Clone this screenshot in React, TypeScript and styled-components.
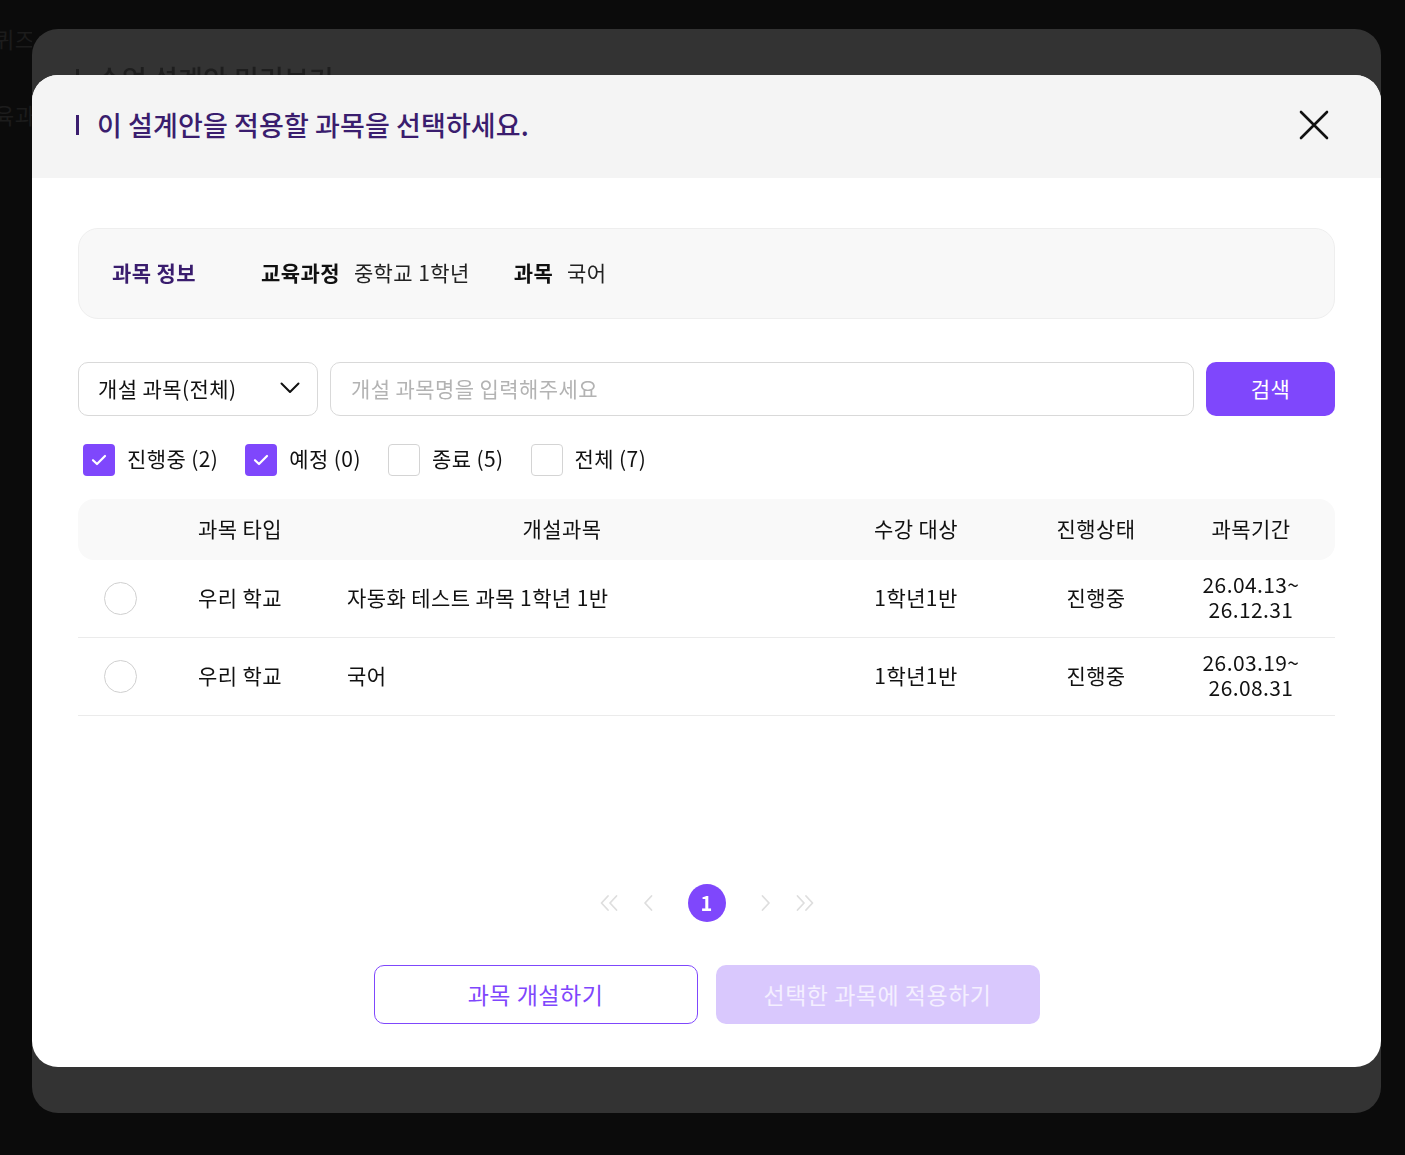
import styled, { createGlobalStyle } from 'styled-components';

const PURPLE = '#7f47fc';

const GlobalStyle = createGlobalStyle`
  * { box-sizing: border-box; }
  html, body { margin: 0; padding: 0; }
  body {
    font-family: 'Noto Sans CJK KR', 'Noto Sans', sans-serif;
    background: #0b0b0b;
    color: #111;
    letter-spacing: 0.4px;
  }
`;

type Row = {
  id: number;
  type: string;
  name: string;
  target: string;
  status: string;
  start: string;
  end: string;
};

const rows: Row[] = [
  { id: 1, type: '우리 학교', name: '자동화 테스트 과목 1학년 1반', target: '1학년1반', status: '진행중', start: '26.04.13~', end: '26.12.31' },
  { id: 2, type: '우리 학교', name: '국어', target: '1학년1반', status: '진행중', start: '26.03.19~', end: '26.08.31' },
];

const filters = [
  { label: '진행중 (2)', checked: true },
  { label: '예정 (0)', checked: true },
  { label: '종료 (5)', checked: false },
  { label: '전체 (7)', checked: false },
];

const CheckIcon = () => (
  <svg width='20' height='20' viewBox='0 0 20 20' fill='none'>
    <path d='M4 10.2l4 3.8 8-8' stroke='#fff' strokeWidth='2.2' strokeLinecap='round' strokeLinejoin='round' />
  </svg>
);

const CloseIcon = () => (
  <svg width='30' height='30' viewBox='0 0 30 30' fill='none'>
    <path d='M2 2l26 26M28 2L2 28' stroke='#111' strokeWidth='2.6' strokeLinecap='round' />
  </svg>
);

const ChevronDown = () => (
  <svg width='20' height='12' viewBox='0 0 20 12' fill='none'>
    <path d='M1.5 1.5l8.5 8.5 8.5-8.5' stroke='#111' strokeWidth='2' strokeLinecap='round' strokeLinejoin='round' />
  </svg>
);

const DoubleArrow = ({ right }: { right?: boolean }) => (
  <svg width='18' height='20' viewBox='0 0 18 20' fill='none'>
    <g transform={right ? 'matrix(-1 0 0 1 18 0)' : undefined} stroke='#dedede' strokeWidth='1.8' strokeLinecap='round' strokeLinejoin='round'>
      <path d='M8 3L1.5 10 8 17' />
      <path d='M16.5 3L10 10l6.5 7' />
    </g>
  </svg>
);

const SingleArrow = ({ right }: { right?: boolean }) => (
  <svg width='10' height='20' viewBox='0 0 10 20' fill='none'>
    <g transform={right ? 'matrix(-1 0 0 1 10 0)' : undefined} stroke='#dedede' strokeWidth='1.8' strokeLinecap='round' strokeLinejoin='round'>
      <path d='M8.5 3L2 10l6.5 7' />
    </g>
  </svg>
);

const App = () => {
  return (
    <>
      <GlobalStyle />
      <Page>
        <BehindColumn>
          <DimText>퀴즈</DimText>
          <DimText>육과</DimText>
        </BehindColumn>
        <Overlay>
          <BackModal>
            <ModalHeader $dim>
              <Title $dim>
                <TitleBar $dim />
                수업 설계안 미리보기
              </Title>
            </ModalHeader>
          </BackModal>
          <Modal>
            <ModalHeader>
              <Title>
                <TitleBar />
                이 설계안을 적용할 과목을 선택하세요.
              </Title>
              <CloseButton aria-label='닫기'>
                <CloseIcon />
              </CloseButton>
            </ModalHeader>

            <ModalBody>
              <InfoBox>
                <InfoHeading>과목 정보</InfoHeading>
                <InfoItem>
                  <InfoLabel>교육과정</InfoLabel>
                  <InfoValue>중학교 1학년</InfoValue>
                </InfoItem>
                <InfoItem>
                  <InfoLabel>과목</InfoLabel>
                  <InfoValue>국어</InfoValue>
                </InfoItem>
              </InfoBox>

              <SearchRow>
                <SelectBox>
                  <span>개설 과목(전체)</span>
                  <ChevronDown />
                </SelectBox>
                <SearchInput placeholder='개설 과목명을 입력해주세요' />
                <SearchButton>검색</SearchButton>
              </SearchRow>

              <FilterRow>
                {filters.map((f) => (
                  <FilterItem key={f.label}>
                    <CheckBox $checked={f.checked}>{f.checked && <CheckIcon />}</CheckBox>
                    {f.label}
                  </FilterItem>
                ))}
              </FilterRow>

              <Table>
                <HeaderRow>
                  <Cell />
                  <Cell>과목 타입</Cell>
                  <Cell>개설과목</Cell>
                  <Cell>수강 대상</Cell>
                  <Cell>진행상태</Cell>
                  <Cell>과목기간</Cell>
                </HeaderRow>
                {rows.map((r) => (
                  <BodyRow key={r.id}>
                    <Cell>
                      <Radio />
                    </Cell>
                    <Cell>{r.type}</Cell>
                    <Cell $left>{r.name}</Cell>
                    <Cell>{r.target}</Cell>
                    <Cell>{r.status}</Cell>
                    <DateCell>
                      <span>{r.start}</span>
                      <span>{r.end}</span>
                    </DateCell>
                  </BodyRow>
                ))}
              </Table>

              <Pagination>
                <DoubleArrow />
                <SingleArrow />
                <PageNumber>1</PageNumber>
                <SingleArrow right />
                <DoubleArrow right />
              </Pagination>

              <Actions>
                <OutlineButton>과목 개설하기</OutlineButton>
                <FilledButton disabled>선택한 과목에 적용하기</FilledButton>
              </Actions>
            </ModalBody>
          </Modal>
        </Overlay>
      </Page>
    </>
  );
};

export default App;

const Page = styled.div`
  min-height: 100vh;
  background: #0b0b0b;
  overflow: hidden;
`;

const BehindColumn = styled.div`
  display: flex;
  flex-direction: column;
  gap: 44px;
  padding: 22px 0 0 0;
  width: 32px;
  overflow: hidden;
`;

const DimText = styled.div`
  font-size: 22px;
  color: #1c1c1c;
  white-space: nowrap;
  text-indent: -6px;
`;

const Overlay = styled.div`
  position: fixed;
  inset: 0;
  display: grid;
  place-items: center;
  padding: 0 0 13px 8px;
`;

const BackModal = styled.div`
  grid-area: 1 / 1;
  width: 1349px;
  height: 1084px;
  border-radius: 26px;
  background: #333333;
  overflow: hidden;
`;

const Modal = styled.div`
  grid-area: 1 / 1;
  width: 1349px;
  height: 992px;
  border-radius: 26px;
  background: #ffffff;
  overflow: hidden;
  display: flex;
  flex-direction: column;
`;

const ModalHeader = styled.div<{ $dim?: boolean }>`
  height: 103px;
  flex-shrink: 0;
  display: flex;
  align-items: center;
  justify-content: space-between;
  padding: 0 52px 4px 44px;
  background: ${(p) => (p.$dim ? 'transparent' : '#f4f4f4')};
`;

const Title = styled.h2<{ $dim?: boolean }>`
  margin: 0;
  display: flex;
  align-items: center;
  gap: 18px;
  font-size: 27px;
  font-weight: 500;
  letter-spacing: 0.1px;
  color: ${(p) => (p.$dim ? '#1e1e1e' : '#3a1d6e')};
`;

const TitleBar = styled.span<{ $dim?: boolean }>`
  display: inline-block;
  width: 3px;
  height: 20px;
  background: ${(p) => (p.$dim ? '#1e1e1e' : '#3a1d6e')};
`;

const CloseButton = styled.button`
  border: 0;
  background: none;
  padding: 0;
  display: flex;
  cursor: pointer;
`;

const ModalBody = styled.div`
  padding: 50px 46px 0;
  display: flex;
  flex-direction: column;
`;

const InfoBox = styled.div`
  height: 91px;
  border: 1px solid #eeeeee;
  border-radius: 20px;
  background: #f8f8f8;
  display: flex;
  align-items: center;
  padding: 0 33px 3px;
  font-size: 21px;
`;

const InfoHeading = styled.div`
  color: #3a1d6e;
  font-weight: 700;
  width: 149px;
`;

const InfoItem = styled.div`
  display: flex;
  align-items: center;
  gap: 14px;
  margin-right: 44px;
`;

const InfoLabel = styled.span`
  font-weight: 700;
  color: #111;
`;

const InfoValue = styled.span`
  color: #222;
`;

const SearchRow = styled.div`
  margin-top: 43px;
  display: flex;
  gap: 12px;
  height: 54px;
`;

const SelectBox = styled.div`
  width: 240px;
  border: 1px solid #d9d9d9;
  border-radius: 10px;
  display: flex;
  align-items: center;
  justify-content: space-between;
  padding: 0 17px 3px 19px;
  font-size: 21px;
  color: #111;
`;

const SearchInput = styled.input`
  flex: 1;
  border: 1px solid #d9d9d9;
  border-radius: 10px;
  padding: 0 20px 3px;
  font-family: inherit;
  font-size: 21px;
  letter-spacing: 0.4px;
  color: #111;
  outline: none;
  &::placeholder {
    color: #b3b3b3;
  }
`;

const SearchButton = styled.button`
  width: 129px;
  border: 0;
  border-radius: 10px;
  background: ${PURPLE};
  color: #fff;
  font-family: inherit;
  font-size: 21px;
  letter-spacing: 0.4px;
  padding-bottom: 3px;
`;

const FilterRow = styled.div`
  margin-top: 28px;
  padding-left: 5px;
  display: flex;
  gap: 27px;
  height: 32px;
`;

const FilterItem = styled.label`
  display: flex;
  align-items: center;
  gap: 12px;
  font-size: 21px;
  color: #111;
  line-height: 1;
  padding-bottom: 3px;
`;

const CheckBox = styled.span<{ $checked: boolean }>`
  width: 32px;
  height: 32px;
  margin-bottom: -3px;
  border-radius: 4px;
  display: flex;
  align-items: center;
  justify-content: center;
  background: ${(p) => (p.$checked ? PURPLE : '#fff')};
  border: ${(p) => (p.$checked ? 'none' : '1px solid #d4d4d4')};
`;

const Table = styled.div`
  margin-top: 23px;
  display: flex;
  flex-direction: column;
`;

const gridCols = '85px 154px 490px 218px 142px 1fr';

const HeaderRow = styled.div`
  display: grid;
  grid-template-columns: ${gridCols};
  height: 61px;
  align-items: center;
  background: #f9f9f9;
  border-radius: 16px;
  font-size: 21px;
  color: #111;
  padding-bottom: 3px;
`;

const BodyRow = styled.div`
  display: grid;
  grid-template-columns: ${gridCols};
  height: 78px;
  align-items: center;
  border-bottom: 1px solid #ebebeb;
  font-size: 21px;
  color: #111;
  padding-bottom: 3px;
`;

const Cell = styled.div<{ $left?: boolean }>`
  display: flex;
  align-items: center;
  justify-content: ${(p) => (p.$left ? 'flex-start' : 'center')};
  padding-left: ${(p) => (p.$left ? '30px' : '0')};
  white-space: nowrap;
`;

const DateCell = styled.div`
  display: flex;
  flex-direction: column;
  align-items: center;
  line-height: 25px;
  white-space: nowrap;
`;

const Radio = styled.span`
  width: 33px;
  height: 33px;
  margin-top: 3px;
  border-radius: 50%;
  border: 1px solid #cfcfcf;
`;

const Pagination = styled.div`
  margin-top: 168px;
  display: flex;
  align-items: center;
  justify-content: center;
  gap: 25px;
  height: 38px;
`;

const PageNumber = styled.span`
  width: 38px;
  height: 38px;
  margin: 0 10px;
  border-radius: 50%;
  background: ${PURPLE};
  color: #fff;
  font-weight: 700;
  font-size: 20px;
  letter-spacing: 0;
  display: flex;
  align-items: center;
  justify-content: center;
  padding-bottom: 2px;
`;

const Actions = styled.div`
  margin-top: 43px;
  display: flex;
  justify-content: center;
  gap: 18px;
`;

const OutlineButton = styled.button`
  width: 324px;
  height: 59px;
  border: 1px solid ${PURPLE};
  border-radius: 10px;
  background: #fff;
  color: ${PURPLE};
  font-family: inherit;
  font-size: 23px;
  letter-spacing: 0.5px;
  padding-bottom: 3px;
`;

const FilledButton = styled.button`
  width: 324px;
  height: 59px;
  border: 0;
  border-radius: 10px;
  background: #d9c8fd;
  color: #f4efff;
  font-family: inherit;
  font-size: 23px;
  letter-spacing: 0.5px;
  padding-bottom: 3px;
`;
